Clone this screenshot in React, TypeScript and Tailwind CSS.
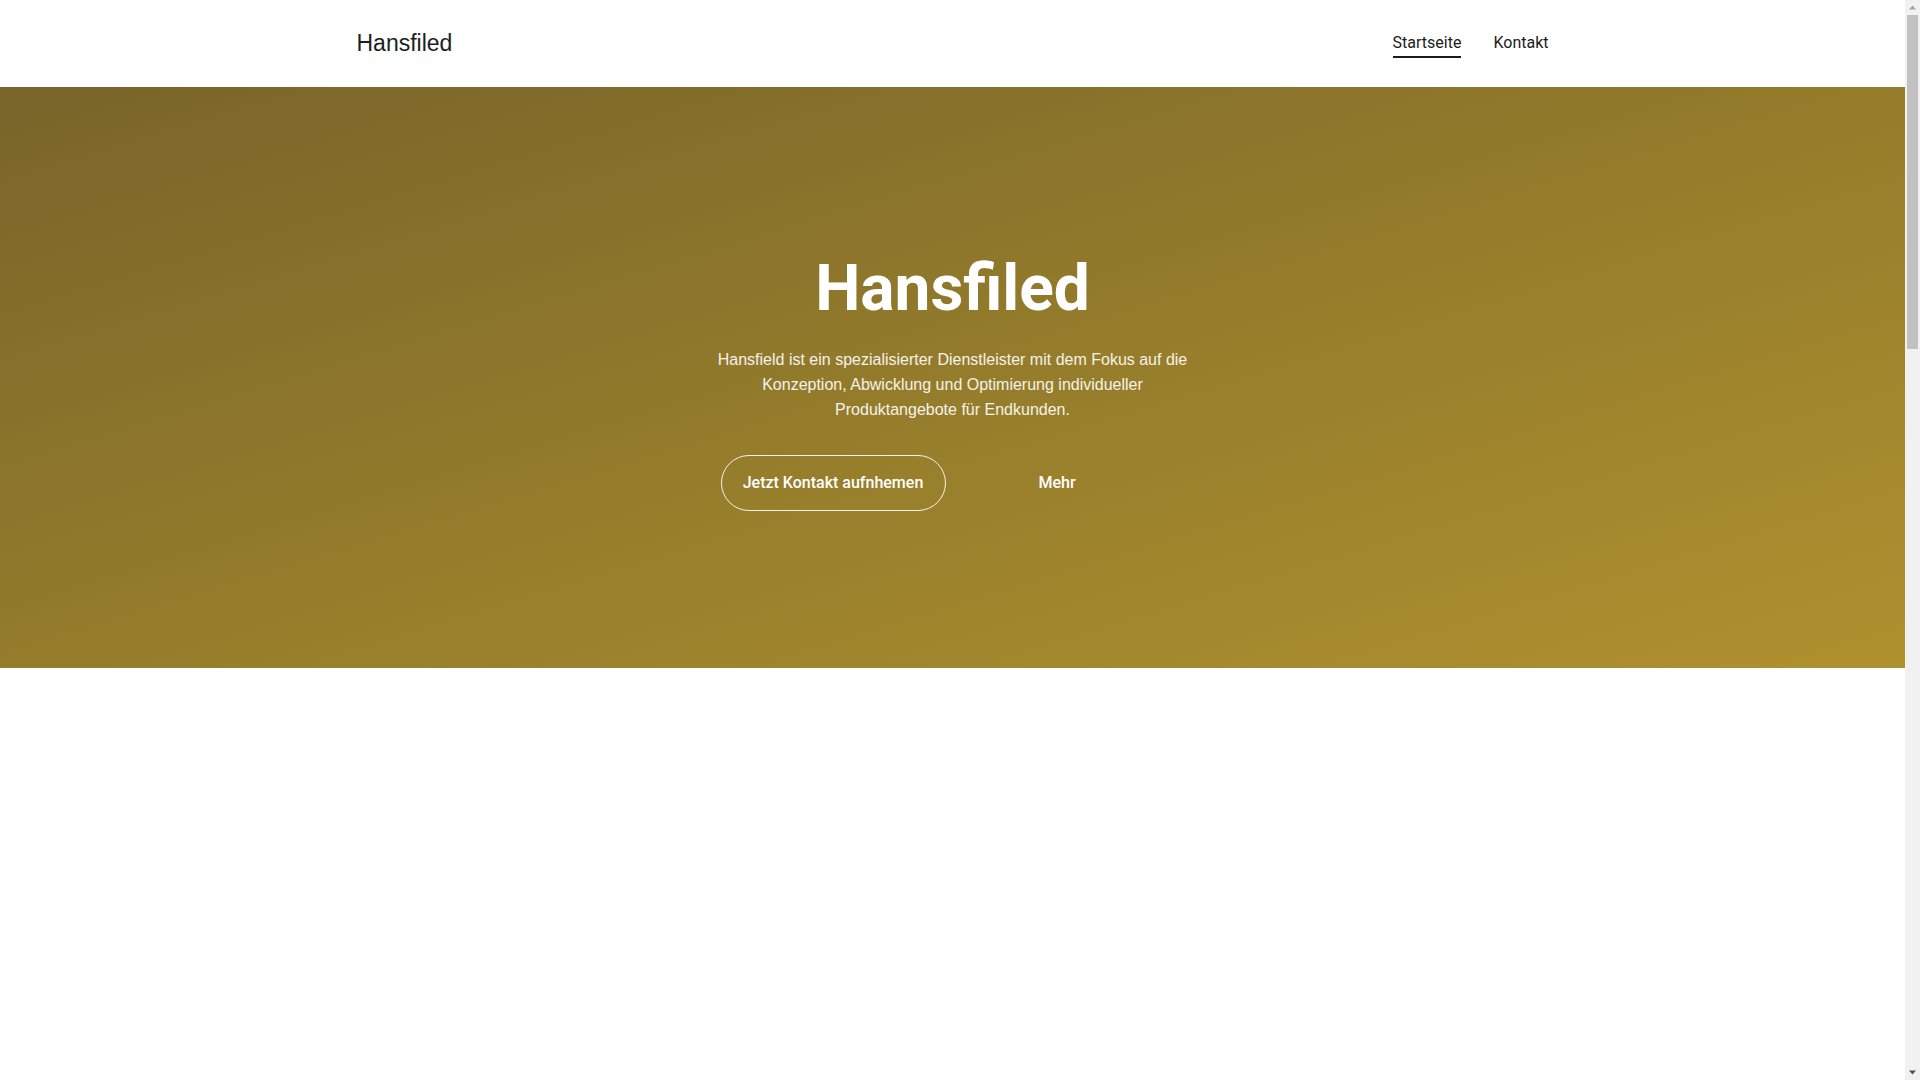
import React from 'react'

const Header = () => {
  return (
    <header className="h-[87px] bg-white">
      <div className="mx-auto flex h-full max-w-[1192px] items-center justify-between">
        <a href="#" className="text-[23px] text-[#1b1e22] font-['Liberation_Sans',Arial,sans-serif] pb-[1px]">
          Hansfiled
        </a>
        <nav className="flex items-center gap-[32px] font-['Roboto',sans-serif] text-[16px] text-[#1b1b1b]">
          <a href="#" className="border-b-2 border-[#1b1b1b] pb-[1px] mt-[2px]">
            Startseite
          </a>
          <a href="#" className="pb-[2px]">
            Kontakt
          </a>
        </nav>
      </div>
    </header>
  )
}

const Hero = () => {
  return (
    <section className="h-[581px] bg-gradient-to-br from-[#79642a] via-[#947c2b] to-[#b0912f]">
      <div className="flex h-full flex-col items-center pt-[164px] text-white">
        <h1 className="font-['Roboto',sans-serif] text-[64px] font-bold leading-[76px]">
          Hansfiled
        </h1>
        <p className="mt-[20px] max-w-[480px] text-center font-['Liberation_Sans',Arial,sans-serif] text-[16px] leading-[25px] text-white/90">
          Hansfield ist ein spezialisierter Dienstleister mit dem Fokus auf die Konzeption, Abwicklung
          und Optimierung individueller Produktangebote für Endkunden.
        </p>
        <div className="mt-[33px] flex w-[470px] items-center pl-[3px] font-['Roboto',sans-serif] text-[16px] font-medium">
          <a
            href="#"
            className="flex h-[56px] w-[225px] items-center justify-center rounded-full border border-white/90"
          >
            Jetzt Kontakt aufnhemen
          </a>
          <a href="#" className="ml-[93px] flex h-[56px] items-center">
            Mehr
          </a>
        </div>
      </div>
    </section>
  )
}

// the page's own scrollbar, as it shows in the screenshot
const ScrollBar = () => {
  return (
    <div className="flex w-[15px] shrink-0 flex-col items-center bg-[#f1f1f1]">
      <svg width="15" height="15" viewBox="0 0 15 15" className="shrink-0">
        <path d="M4 9.5 L7.5 5.5 L11 9.5 Z" fill="#a3a3a3" />
      </svg>
      <div className="h-[334px] w-[11px] bg-[#c1c1c1]" />
      <div className="flex-1" />
      <svg width="15" height="15" viewBox="0 0 15 15" className="shrink-0">
        <path d="M4 5.5 L7.5 9.5 L11 5.5 Z" fill="#505050" />
      </svg>
    </div>
  )
}

export default function App() {
  return (
    <div className="flex h-screen overflow-hidden bg-white">
      <div className="min-w-0 flex-1">
        <Header />
        <Hero />
        <div className="h-[2700px] bg-white" />
      </div>
      <ScrollBar />
    </div>
  )
}
